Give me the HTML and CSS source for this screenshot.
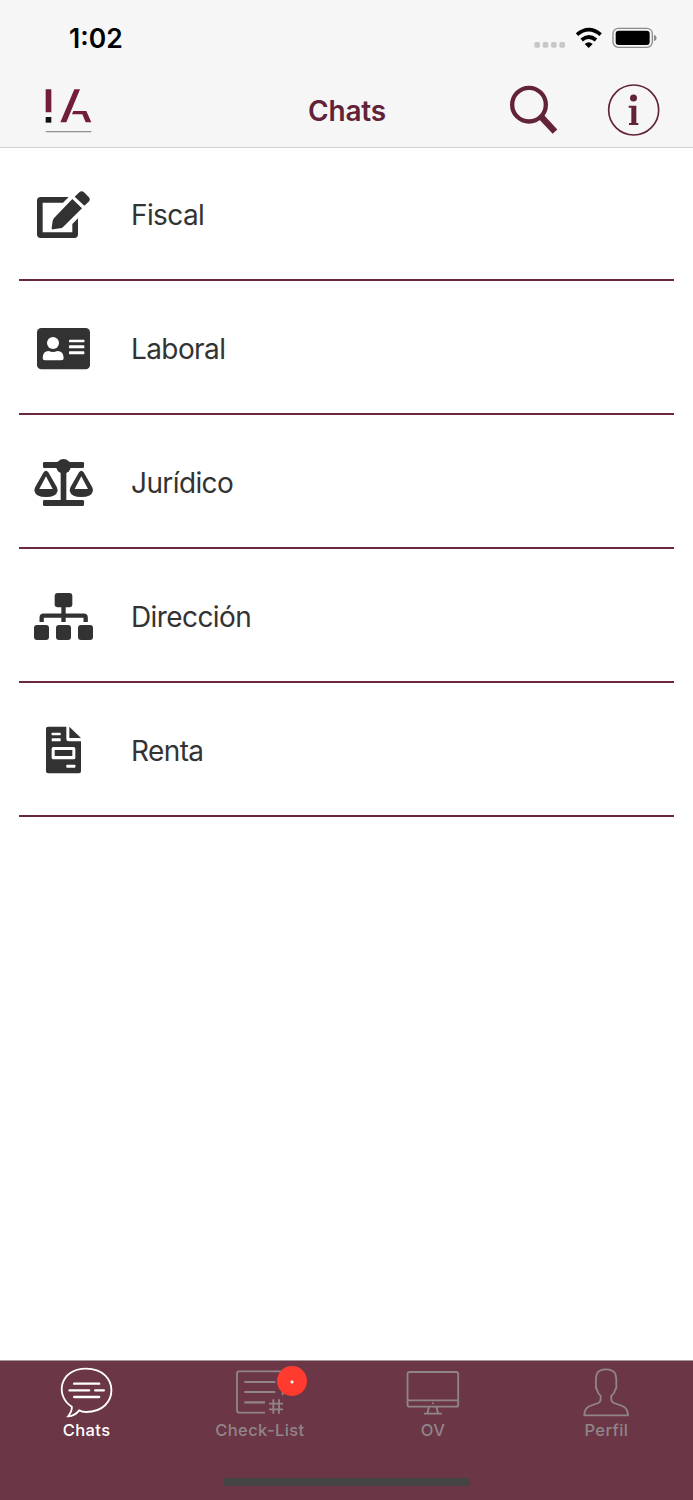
FILE: index.html
```html
<!DOCTYPE html>
<html lang="es">
<head>
<meta charset="utf-8">
<title>Chats</title>
<link rel="stylesheet" href="styles.css">
</head>
<body>
<div class="app">
  <header class="header">
    <div class="status">
      <span class="time">1:02</span>
      <svg class="indicators" viewBox="150 75 390 75">
        <g fill="#c7c7c7"><rect x="163" y="126" width="17" height="17" rx="5"/><rect x="188" y="126" width="17" height="17" rx="5"/><rect x="213" y="126" width="17" height="17" rx="5"/><rect x="238" y="126" width="17" height="17" rx="5"/></g>
        <g fill="none" stroke="#000" stroke-width="11"><path d="M291 104Q326 74 362 104"/><path d="M305 120Q326 102 348 120"/></g>
        <path d="M314 132Q326 121 338 132L326 144Z"/>
        <rect x="399" y="85" width="118" height="57" rx="16" fill="none" stroke="#8b8b8b" stroke-width="4"/>
        <rect x="407" y="92" width="102" height="43" rx="9"/>
        <path d="M522 104Q530 107 530 114T522 124Z" fill="#8b8b8b"/>
      </svg>
    </div>
    <div class="navbar">
      <svg class="logo" viewBox="129 258 153 150">
        <path fill="#731e38" d="M137 268h17v69h-17zM223 268h17L199 367h-18zM220 333h39l15 34h-17l-10-24h-31z"/>
        <path fill="#111" d="M137 351h17v17h-17z"/><path fill="#929092" d="M137 393h137v4H137z"/>
      </svg>
      <h1 class="title">Chats</h1>
      <svg class="search" viewBox="84 249 156 162" fill="none" stroke="#622338">
        <circle cx="147" cy="314" r="50.500" stroke-width="13"/><path d="M180 347L190 357" stroke-width="13"/><path d="M184 351L225 395" stroke-width="19"/>
      </svg>
      <svg class="info" viewBox="381 249 162 162">
        <circle cx="461" cy="330" r="75" fill="none" stroke="#622338" stroke-width="5"/>
        <circle cx="460.500" cy="294" r="10.500" fill="#622338"/><path fill="#622338" d="M446 317h23v52h6v6h-28v-6h7v-46h-8z"/>
      </svg>
    </div>
  </header>

  <main class="list">
    <div class="row">
      <svg class="icon" viewBox="96 45 186 180">
        <path d="M122 81H206L189 98H128V187H217V162L234 145V193Q234 204 223 204H122Q111 204 111 193V92Q111 81 122 81Z"/>
        <path d="M217 87L246 115L190 170Q186 175 180 175L160 178Q154 179 155 173L158 153Q159 147 163 143ZM224 80L238 67Q245 60 252 67L266 81Q273 88 266 95L253 107Z"/>
      </svg><span class="label">Fiscal</span>
    </div>
    <div class="row">
      <svg class="icon" viewBox="96 447 186 180">
        <rect x="111" y="474" width="159" height="124" rx="13"/>
        <g fill="#fff"><circle cx="159" cy="519" r="18"/><path d="M128 565Q128 543 146 543Q159 549 172 543Q191 543 191 565Q191 571 184 571H135Q128 571 128 565Z"/><rect x="207" y="509" width="46" height="8" rx="2"/><rect x="207" y="526" width="46" height="9" rx="2"/><rect x="207" y="544" width="46" height="9" rx="2"/></g>
      </svg><span class="label">Laboral</span>
    </div>
    <div class="row">
      <svg class="icon" viewBox="96 39 186 180">
        <rect x="129" y="66" width="123" height="18" rx="4"/><circle cx="190.500" cy="79" r="22"/><rect x="182" y="80" width="17" height="110"/><rect x="129" y="180" width="123" height="18" rx="4"/>
        <path fill-rule="evenodd" d="M131 97Q138 87 145 97L169 139Q173 145 173 152Q169 171 138 171T103 152Q103 145 107 139ZM138 109L118 147H158ZM237 97Q244 87 251 97L275 139Q279 145 279 152Q275 171 244 171T209 152Q209 145 213 139ZM244 109L224 147H264Z"/>
      </svg><span class="label">Jurídico</span>
    </div>
    <div class="row">
      <svg class="icon" viewBox="96 441 186 180">
        <rect x="164" y="459" width="53" height="43" rx="9"/><rect x="102" y="555" width="45" height="45" rx="9"/><rect x="168" y="555" width="45" height="45" rx="9"/><rect x="234" y="555" width="45" height="45" rx="9"/>
        <path fill="none" stroke="#323232" stroke-width="13" d="M190.500 498V546M125 546V533Q125 527 131 527H251Q257 527 257 533V546"/>
      </svg><span class="label">Dirección</span>
    </div>
    <div class="row">
      <svg class="icon" viewBox="96 63 186 180">
        <path d="M144 80H199V117Q199 124 206 124H243V214Q243 220 237 220H144Q138 220 138 214V86Q138 80 144 80ZM208 80L243 114H208Z"/>
        <g fill="#fff"><rect x="155" y="98" width="27" height="8" rx="2"/><rect x="155" y="115" width="27" height="9" rx="2"/><rect x="155" y="141" width="71" height="37" rx="5"/><rect x="199" y="194" width="27" height="9" rx="2"/></g><path d="M164 150h53v18h-53z"/>
      </svg><span class="label">Renta</span>
    </div>
  </main>

  <nav class="tabs">
    <a class="tab active">
      <svg class="tab-icon" viewBox="81.500 48 180 156">
        <path stroke-width="5.500" d="M126 170C76 140 86 56 169 56C270 56 270 186 169 186Q157 186 148 181Q135 198 115 199Q127 184 126 170Z"/><path stroke-width="7" stroke-linecap="round" d="M133 101H208M119 121H178M196 121H222M133 141H208"/>
      </svg><span>Chats</span>
    </a>
    <a class="tab">
      <svg class="tab-icon" viewBox="91 48 180 156" stroke-width="5.500">
        <path d="M196 188H119Q112 188 112 181V71Q112 64 119 64H242Q249 64 249 71V136"/><path stroke-width="6.500" d="M134 96H227M134 126H227M134 157H196"/><path d="M208 161H250M208 178H250M221 148V191M238 148V191"/>
      </svg><span>Check-List</span><b class="badge"></b>
    </a>
    <a class="tab">
      <svg class="tab-icon" viewBox="39.400 48 180 156" stroke-width="5.500">
        <rect x="53" y="66" width="152" height="104" rx="6"/><path d="M53 151H205M117 171L113 189M140 171L144 189M102 191H156"/><circle cx="129" cy="160" r="3" fill="currentColor" stroke="none"/>
      </svg><span>OV</span>
    </a>
    <a class="tab">
      <svg class="tab-icon" viewBox="49.100 48 180 156" stroke-width="5.500">
        <path d="M74 196Q74 175 91 168L116 159Q123 156 123 148V138Q114 130 112 119Q107 113 109 104C108 75 109 58 139 58S171 75 170 104Q172 113 167 119Q165 130 155 138V148Q155 156 163 159L188 168Q205 175 205 196Z"/>
      </svg><span>Perfil</span>
    </a>
    <i class="home-bar"></i>
  </nav>
</div>
</body>
</html>
```
FILE: styles.css
```css
* { box-sizing: border-box; }
body { margin: 0; background: #fff; font-family: Inter, "Liberation Sans", sans-serif; }
svg { display: block; flex: none; }
.app { width: 693px; height: 1500px; display: flex; flex-direction: column; }
.header { height: 148px; flex: none; background: #f6f6f6; border-bottom: 1px solid #d0d0d0; }
.status { height: 74px; display: flex; justify-content: space-between; padding: 25px 33px 0 69px; }
.time { font-size: 26.5px; line-height: 27px; font-weight: 600; color: #000; }
.indicators { width: 130px; height: 25px; }
.navbar { height: 73px; padding: 9px 32px 0 43px; display: grid; grid-template-columns: 51px 1fr 52px 54px; column-gap: 47px; }
.logo { width: 51px; height: 50px; margin-top: 3px; }
.title { margin: 0; padding-left: 167px; font-size: 28px; line-height: 56px; font-weight: 600; letter-spacing: -0.2px; color: #622338; white-space: nowrap; }
.search { width: 52px; height: 54px; }
.info { width: 54px; height: 54px; }
.list { flex: 1; margin: -1px 19px 0; }
.row { height: 134px; display: flex; align-items: flex-start; gap: 37px; padding: 38px 0 0 13px; border-bottom: 2px solid #6b2742; }
.icon { width: 62px; height: 60px; fill: #323232; }
.label { font-size: 28px; line-height: 61px; letter-spacing: -0.6px; color: #333; }
.tabs { position: relative; flex: none; height: 140px; display: grid; grid-template-columns: repeat(4, 1fr); background: #6b3645; border-top: 1px solid #a6979c; }
.tab { position: relative; display: flex; flex-direction: column; align-items: center; padding-top: 5px; color: #918589; font-size: 16.5px; line-height: 24px; font-weight: 500; letter-spacing: 0.4px; }
.tab.active { color: #fff; }
.tab-icon { width: 60px; height: 52px; fill: none; stroke: currentColor; }
.badge { position: absolute; left: 104px; top: 5px; width: 30px; height: 30px; border-radius: 50%; background: radial-gradient(circle at 15px 16px, #fff 1px, #ff3b30 2px); }
.home-bar { position: absolute; left: 223px; bottom: 14px; width: 247px; height: 8px; border-radius: 4px; background: #444; }
```
